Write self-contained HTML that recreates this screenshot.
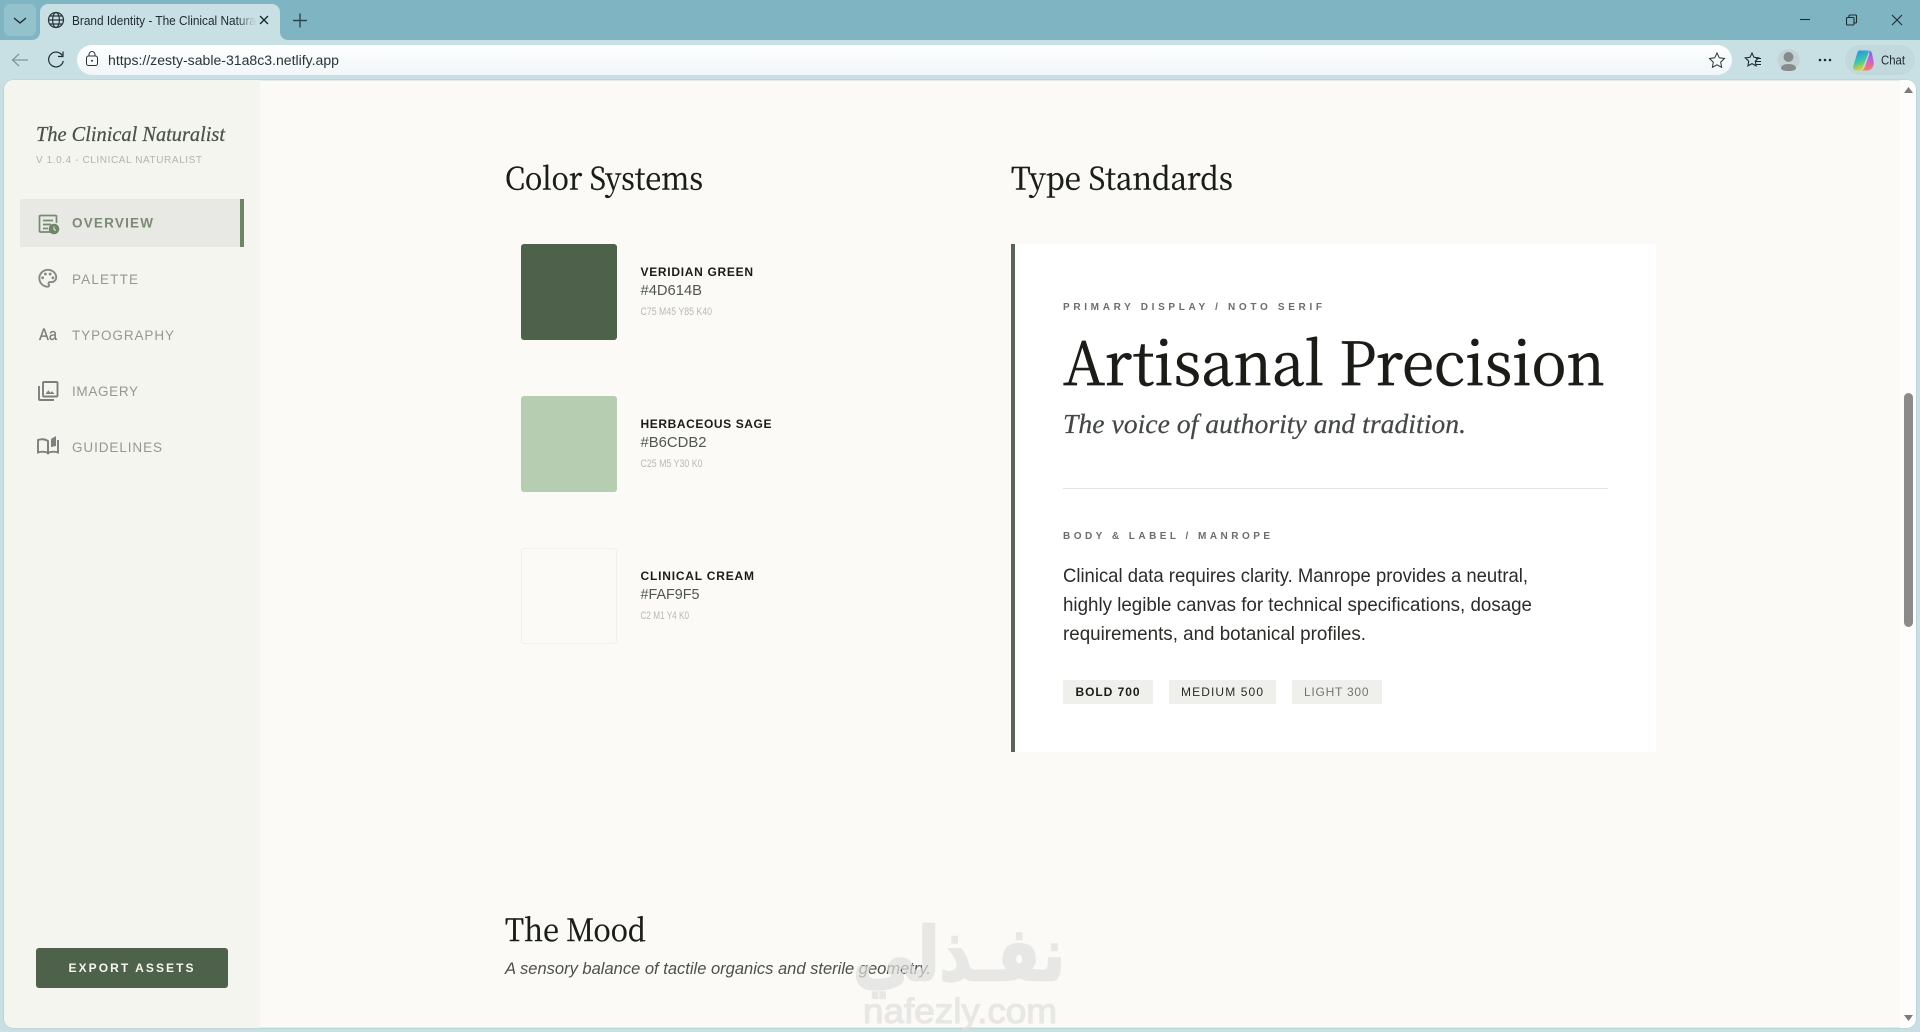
<!DOCTYPE html>
<html lang="en"><head><meta charset="utf-8"><title>Brand Identity - The Clinical Naturalist</title>
<style>
html,body{margin:0;padding:0;width:1920px;height:1032px;overflow:hidden;background:#c8dfe3}
svg{display:block}
.ui{font-family:"Liberation Sans",sans-serif}
.sf{font-family:"Noto Serif CJK SC","Liberation Serif",serif}
.it{font-family:"Liberation Serif",serif;font-style:italic}
.sa{font-family:"Liberation Sans",sans-serif}
</style></head><body>
<svg xmlns="http://www.w3.org/2000/svg" width="1920" height="1032" viewBox="0 0 1920 1032">
<defs>
<linearGradient id="fade" gradientUnits="userSpaceOnUse" x1="236" y1="0" x2="256" y2="0"><stop offset="0" stop-color="#1d2a2e"/><stop offset="1" stop-color="#1d2a2e" stop-opacity="0"/></linearGradient>
<linearGradient id="addr" x1="0" y1="0" x2="0" y2="1"><stop offset="0" stop-color="#fff"/><stop offset="1" stop-color="#f0f6f7"/></linearGradient>
<linearGradient id="cp1" x1="0.200" y1="0" x2="0.500" y2="1"><stop offset="0" stop-color="#2a8fe8"/><stop offset=".55" stop-color="#3fc6a8"/><stop offset="1" stop-color="#f2d01e"/></linearGradient>
<linearGradient id="cp2" x1="0.500" y1="0" x2="0.300" y2="1"><stop offset="0" stop-color="#6a6fe8"/><stop offset=".5" stop-color="#d85fc8"/><stop offset="1" stop-color="#f58a4c"/></linearGradient>
</defs>

<!-- browser chrome -->
<rect width="1920" height="40" fill="#7fb5c2"/>
<rect y="40" width="1920" height="992" fill="#c8dfe3"/>
<rect x="4" y="4" width="32" height="32" rx="6" fill="#93c2cd"/>
<path d="M14 18l6 5 6-5" fill="none" stroke="#1c2b30" stroke-width="1.4"/>
<path d="M32 40a8 8 0 0 0 8-8V12a8 8 0 0 1 8-8h224a8 8 0 0 1 8 8v20a8 8 0 0 0 8 8z" fill="#c8dfe3"/>
<g fill="none" stroke="#26353a" stroke-width="1.2"><circle cx="56" cy="20" r="7.5"/><ellipse cx="56" cy="20" rx="3.4" ry="7.5"/><path d="M48.5 20h15M49.6 16h12.8M49.6 24h12.8"/></g>
<text class="ui" x="72" y="25" font-size="12.5" fill="url(#fade)" textLength="184" lengthAdjust="spacingAndGlyphs">Brand Identity - The Clinical Natura</text>
<path d="M260 16l8 8M268 16l-8 8" stroke="#1c2b30" stroke-width="1.4"/>
<path d="M300 13.5v14M293 20.500h14" stroke="#2b4650" stroke-width="1.4"/>
<path d="M1800 19.500h10" stroke="#1c2b30" stroke-width="1.1"/>
<g fill="none" stroke="#1c2b30" stroke-width="1.1"><rect x="1846.500" y="17.500" width="7.500" height="7.500" rx="1"/><path d="M1849 17v-1a1 1 0 0 1 1-1h5.500a1 1 0 0 1 1 1v6a1 1 0 0 1-1 1h-1.500"/></g>
<path d="M1892 15l10 10M1902 15l-10 10" stroke="#1c2b30" stroke-width="1.1"/>

<path d="M28 60H13M19 54l-6.500 6 6.500 6" fill="none" stroke="#7f989e" stroke-width="1.3"/>
<path d="M62.300 55.500A7.400 7.400 0 1 0 63.300 61" fill="none" stroke="#1c2b30" stroke-width="1.2"/><path d="M63 51.500v5h-5" fill="none" stroke="#1c2b30" stroke-width="1.2"/>
<rect x="77" y="45" width="1655" height="30" rx="15" fill="url(#addr)"/>
<g fill="none" stroke="#2a3436" stroke-width="1"><rect x="86.500" y="56" width="11" height="9.500" rx="2"/><path d="M89 56v-1.500a3 3 0 0 1 6 0V56"/></g><circle cx="92" cy="60.800" r="1" fill="#2a3436"/>
<text class="ui" x="108" y="65" font-size="13.500" fill="#2a3436" textLength="231" lengthAdjust="spacingAndGlyphs">https://zesty-sable-31a8c3.netlify.app</text>
<path d="M1717 53l2.300 4.800 5.200.7-3.800 3.600.9 5.200-4.600-2.500-4.600 2.500.9-5.200-3.800-3.600 5.200-.7z" fill="none" stroke="#2a3436" stroke-width="1"/>
<path d="M1752 53l2 4.300 4.700.6-3.400 3.200.8 4.700-4.100-2.200-4.100 2.200.8-4.700-3.400-3.200 4.700-.6z" fill="none" stroke="#1c2b30" stroke-width="1.1"/><path d="M1756 58.500h5M1756 61.500h5M1756 64.500h5" stroke="#1c2b30" stroke-width="1"/>
<circle cx="1788.500" cy="60" r="11" fill="#c4d2d3"/><circle cx="1788.500" cy="57" r="5" fill="#868c8d"/><path d="M1781 68.500c0-3 3-4.500 7.500-4.500s7.500 1.500 7.500 4.500c0 1.500-3.500 2.500-7.500 2.500s-7.500-1-7.500-2.500z" fill="#868c8d"/>
<g fill="#1c2b30"><circle cx="1820" cy="60" r="1.300"/><circle cx="1825" cy="60" r="1.300"/><circle cx="1830" cy="60" r="1.300"/></g>
<rect x="1845" y="45" width="70" height="30" rx="15" fill="#c1d8dc"/>
<path d="M1859 50.500h8c1.500 0 2 1 1.500 2.500L1863 67c-.8 2-2 3.500-4 3.500h-2.500c-2.500 0-4-2-3.200-4.500l3-10c.8-2.800 1.700-5.500 2.700-5.500z" fill="url(#cp1)"/>
<path d="M1868 50.500c2 0 3.500 1 4 3l1.800 9c.4 3-2 8-6 8h-7c2 0 3.300-1.500 4-3.500l4.200-12c.5-2 .5-4.500-1-4.500z" fill="url(#cp2)"/>
<text class="ui" x="1881" y="64.500" font-size="12.500" fill="#1c2b30" textLength="24" lengthAdjust="spacingAndGlyphs">Chat</text>

<!-- page -->
<rect x="4" y="80" width="1912" height="948" rx="9" fill="#fbfaf6" stroke="#9fb9be" stroke-width=".6"/>
<path d="M1900 80h7a9 9 0 0 1 9 9v930a9 9 0 0 1-9 9h-7z" fill="#fdfdfb"/>
<path d="M260 80H13a9 9 0 0 0-9 9v930a9 9 0 0 0 9 9h247z" fill="#f5f5f0"/>

<!-- sidebar -->
<text class="it" x="36" y="141" font-size="21" fill="#4a5249" stroke="#4a5249" stroke-width=".25" textLength="189" lengthAdjust="spacingAndGlyphs">The Clinical Naturalist</text>
<text class="sa" x="36" y="163" font-size="10" fill="#b4b4ae" textLength="166" lengthAdjust="spacing">V 1.0.4 - CLINICAL NATURALIST</text>
<rect x="20" y="199" width="224" height="48" fill="#e8e9e4"/>
<rect x="240" y="199" width="4" height="48" fill="#6f8568"/>
<g fill="none" stroke="#768a70" stroke-width="1.700"><path d="M52 232H40.500a1 1 0 0 1-1-1V216.500a1 1 0 0 1 1-1h15a1 1 0 0 1 1 1V223"/><path d="M43 220.500h10M43 224.500h8M43 228.500h5"/></g>
<circle cx="54" cy="229" r="5.300" fill="#6f8568"/><path d="M54 226.500v3l2 1" fill="none" stroke="#e8e9e4" stroke-width="1"/>
<text class="sa" x="72" y="227.500" font-size="13.500" font-weight="700" fill="#798b73" textLength="81" lengthAdjust="spacing">OVERVIEW</text>

<g transform="translate(36.500 267) scale(.94)" fill="#868886"><path d="M12 22C6.490 22 2 17.510 2 12S6.490 2 12 2s10 4.040 10 9c0 3.310-2.690 6-6 6h-1.770c-.28 0-.5.22-.5.5 0 .12.05.23.13.33.41.47.64 1.060.64 1.670A2.500 2.500 0 0 1 12 22zm0-18c-4.410 0-8 3.590-8 8s3.590 8 8 8c.28 0 .5-.22.5-.5a.54.54 0 0 0-.14-.35c-.41-.46-.63-1.050-.63-1.650a2.500 2.500 0 0 1 2.500-2.500H16c2.210 0 4-1.790 4-4 0-3.860-3.590-7-8-7z"/><circle cx="6.500" cy="11.500" r="1.500"/><circle cx="9.500" cy="7.500" r="1.500"/><circle cx="14.500" cy="7.500" r="1.500"/><circle cx="17.500" cy="11.500" r="1.500"/></g>
<text class="sa" x="72" y="284" font-size="13.500" fill="#969793" textLength="66" lengthAdjust="spacing">PALETTE</text>

<text class="sa" x="39" y="340" font-size="16.500" font-weight="400" fill="#7b7d7b" stroke="#7b7d7b" stroke-width=".3" textLength="18" lengthAdjust="spacingAndGlyphs">Aa</text>
<text class="sa" x="72" y="340" font-size="13.500" fill="#969793" textLength="102" lengthAdjust="spacing">TYPOGRAPHY</text>

<g fill="none" stroke="#7d7f7d" stroke-width="1.900"><rect x="43" y="382" width="14.500" height="14.500" rx="1"/><path d="M39 386v13a1 1 0 0 0 1 1h14"/></g><path d="M45.500 394l2.800-3.800 2.200 2.700 1.500-1.800 2.500 2.900z" fill="#7d7f7d"/>
<text class="sa" x="72" y="396" font-size="13.500" fill="#969793" textLength="66" lengthAdjust="spacing">IMAGERY</text>

<g fill="none" stroke="#7d7f7d" stroke-width="1.900"><path d="M38 440c3-1 7-1 10 1v12c-3-1.500-7-1.500-10-.5z"/><path d="M48 441v12c3-1.500 7-1.500 10-.5V440"/></g><path d="M51 447v-8l5-3v10z" fill="#7d7f7d"/>
<text class="sa" x="72" y="452" font-size="13.500" fill="#969793" textLength="90" lengthAdjust="spacing">GUIDELINES</text>

<rect x="36" y="948" width="192" height="40" rx="3" fill="#4d614b"/>
<text class="sa" x="68.500" y="972" font-size="12" font-weight="700" fill="#f6f6ee" textLength="125" lengthAdjust="spacing">EXPORT ASSETS</text>

<!-- colour systems -->
<text class="sf" x="505" y="189.500" font-size="31" fill="#1a1c18" stroke="#1a1c18" stroke-width=".4" textLength="198" lengthAdjust="spacingAndGlyphs">Color Systems</text>
<text class="sf" x="1011" y="189.500" font-size="31" fill="#1a1c18" stroke="#1a1c18" stroke-width=".4" textLength="222" lengthAdjust="spacingAndGlyphs">Type Standards</text>

<rect x="521" y="244" width="96" height="96" rx="3" fill="#4d614b"/>
<rect x="521" y="396" width="96" height="96" rx="3" fill="#b6cdb2"/>
<rect x="521.500" y="548.500" width="95" height="95" rx="3" fill="#fbfaf6" stroke="#f1f0ec"/>

<g class="sa">
<text x="640.500" y="276" font-size="12" font-weight="700" fill="#1a1c18" textLength="112.500" lengthAdjust="spacing">VERIDIAN GREEN</text>
<text x="640.500" y="295" font-size="15" fill="#525652" textLength="61.500" lengthAdjust="spacingAndGlyphs">#4D614B</text>
<text x="640.500" y="315" font-size="11" fill="#b8b8b4" textLength="71.500" lengthAdjust="spacingAndGlyphs">C75 M45 Y85 K40</text>
<text x="640.500" y="428" font-size="12" font-weight="700" fill="#1a1c18" textLength="131" lengthAdjust="spacing">HERBACEOUS SAGE</text>
<text x="640.500" y="447" font-size="15" fill="#525652" textLength="66" lengthAdjust="spacingAndGlyphs">#B6CDB2</text>
<text x="640.500" y="467" font-size="11" fill="#b8b8b4" textLength="62" lengthAdjust="spacingAndGlyphs">C25 M5 Y30 K0</text>
<text x="640.500" y="580" font-size="12" font-weight="700" fill="#1a1c18" textLength="113.500" lengthAdjust="spacing">CLINICAL CREAM</text>
<text x="640.500" y="599" font-size="15" fill="#525652" textLength="59" lengthAdjust="spacingAndGlyphs">#FAF9F5</text>
<text x="640.500" y="619" font-size="11" fill="#b8b8b4" textLength="48.500" lengthAdjust="spacingAndGlyphs">C2 M1 Y4 K0</text>
</g>

<!-- type card -->
<rect x="1011" y="244" width="645" height="508" fill="#fff"/>
<rect x="1011" y="244" width="4" height="508" fill="#5a6358"/>
<text class="sa" x="1063" y="310" font-size="10" font-weight="700" fill="#6a6e69" textLength="259" lengthAdjust="spacing">PRIMARY DISPLAY / NOTO SERIF</text>
<text class="sf" x="1063" y="385" font-size="60" fill="#1a1c18" stroke="#1a1c18" stroke-width=".7" textLength="542" lengthAdjust="spacingAndGlyphs">Artisanal Precision</text>
<text class="it" x="1063" y="433" font-size="27" fill="#444844" stroke="#444844" stroke-width=".2" textLength="403" lengthAdjust="spacingAndGlyphs">The voice of authority and tradition.</text>
<rect x="1063" y="488" width="545" height="1" fill="#e4e5e1"/>
<text class="sa" x="1063" y="539" font-size="10" font-weight="700" fill="#6a6e69" textLength="207" lengthAdjust="spacing">BODY &amp; LABEL / MANROPE</text>
<g class="sa" font-size="19.500" fill="#2a2c28">
<text x="1063" y="582" textLength="465" lengthAdjust="spacingAndGlyphs">Clinical data requires clarity. Manrope provides a neutral,</text>
<text x="1063" y="611" textLength="469" lengthAdjust="spacingAndGlyphs">highly legible canvas for technical specifications, dosage</text>
<text x="1063" y="640" textLength="303" lengthAdjust="spacingAndGlyphs">requirements, and botanical profiles.</text>
</g>
<rect x="1063" y="680" width="90" height="24" fill="#efefec"/>
<rect x="1169" y="680" width="107" height="24" fill="#efefec"/>
<rect x="1292" y="680" width="90" height="24" fill="#efefec"/>
<text class="sa" x="1075.500" y="696" font-size="12" font-weight="700" fill="#1a1c18" textLength="64" lengthAdjust="spacing">BOLD 700</text>
<text class="sa" x="1181" y="696" font-size="12" fill="#2a2c28" textLength="82" lengthAdjust="spacing">MEDIUM 500</text>
<text class="sa" x="1304" y="696" font-size="12" fill="#73756f" textLength="64.500" lengthAdjust="spacing">LIGHT 300</text>

<!-- mood -->
<text class="sf" x="505" y="941" font-size="31" fill="#1a1c18" stroke="#1a1c18" stroke-width=".4" textLength="141" lengthAdjust="spacingAndGlyphs">The Mood</text>
<text class="sa" x="505" y="974" font-size="17" font-style="italic" fill="#4c504c" textLength="426" lengthAdjust="spacingAndGlyphs">A sensory balance of tactile organics and sterile geometry.</text>

<!-- watermark -->
<g opacity=".7" fill="#dfe0de" stroke="#dfe0de">
<text x="853" y="980" font-family="'DejaVu Sans',sans-serif" font-size="74" font-weight="700" stroke-width="2.500" textLength="212" lengthAdjust="spacingAndGlyphs">نفـذلي</text>
<text x="863" y="1023" font-family="'Liberation Sans',sans-serif" font-size="35" font-weight="400" stroke-width="1.200" textLength="194" lengthAdjust="spacingAndGlyphs">nafezly.com</text>
</g>

<!-- scrollbar -->
<path d="M1904 93l4.500-6 4.500 6z" fill="#7b7b7b"/>
<rect x="1904" y="393" width="9" height="234" rx="4.500" fill="#8b8b8b"/>
<path d="M1904 1015l4.500 6 4.500-6z" fill="#7b7b7b"/>
</svg>
</body></html>
